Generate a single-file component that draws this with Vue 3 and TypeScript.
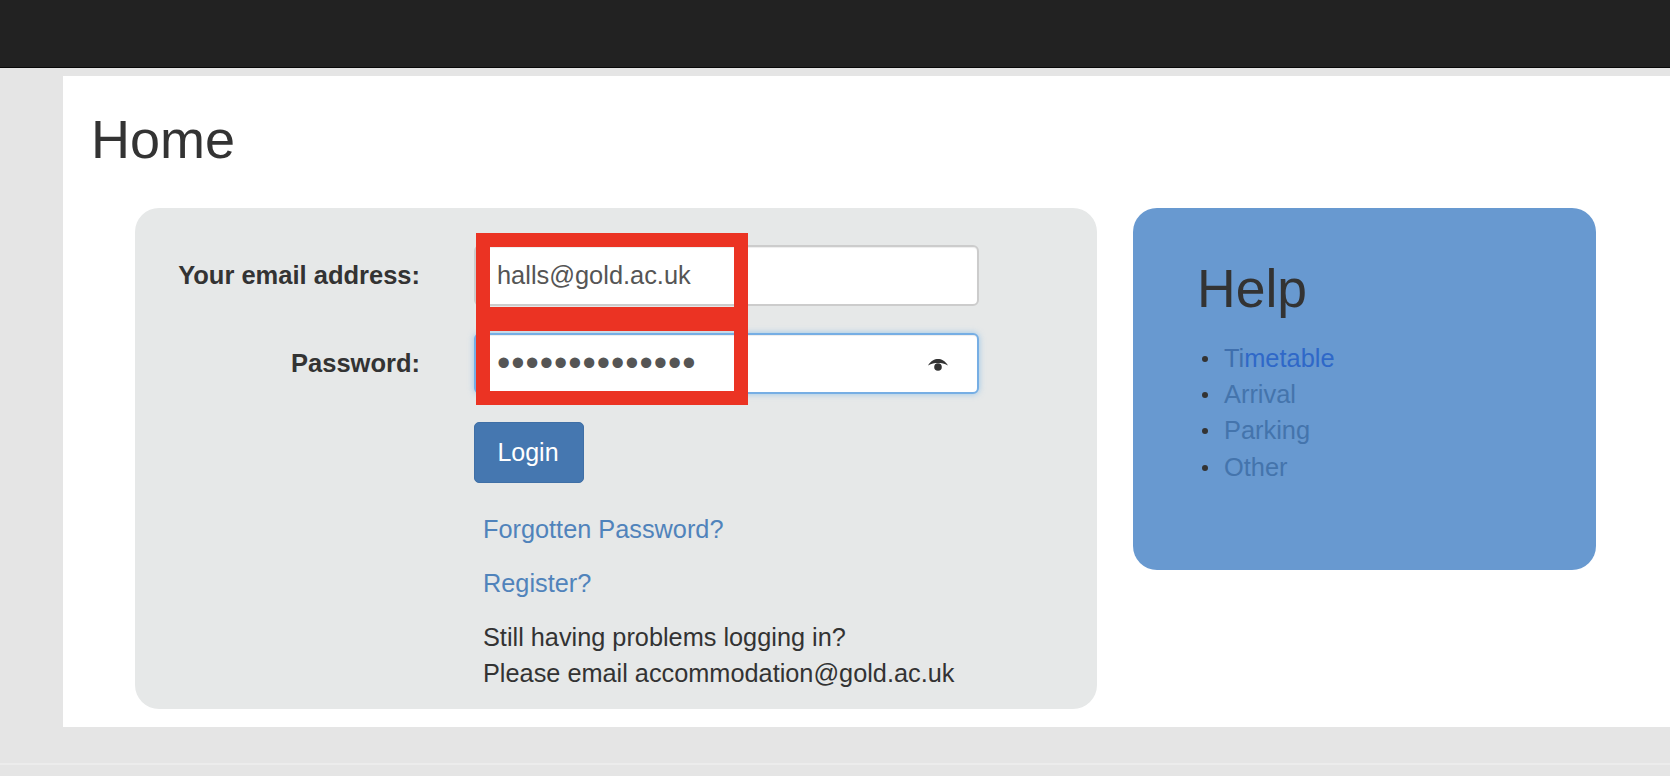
<script setup lang="ts">
const helpLinks: string[] = ['Arrival', 'Parking', 'Other']
</script>

<template>
  <div class="page">
    <header class="topbar"></header>
    <main class="content">
      <h1 class="title">Home</h1>
      <div class="columns">
        <section class="login-card">
          <form class="form" @submit.prevent>
            <label class="label" for="email">Your email address:</label>
            <div class="field">
              <input id="email" class="input" type="text" value="halls@gold.ac.uk" />
              <span class="redact"></span>
            </div>
            <label class="label" for="password">Password:</label>
            <div class="field">
              <input id="password" class="input input-focus" type="password" value="aaaaaaaaaaaaaa" />
              <svg class="eye" viewBox="0 0 22 14" width="22" height="14" aria-hidden="true">
                <path d="M1 7.5 C4 2.5 7.5 1 11 1 C14.5 1 18 2.5 21 7.5 C17.5 5.6 14.5 5 11 5 C7.5 5 4.5 5.6 1 7.5 Z" fill="#333" />
                <circle cx="11" cy="9" r="3.8" fill="#333" />
              </svg>
              <span class="redact redact-lower"></span>
            </div>
            <div class="actions">
              <button class="btn" type="submit">Login</button>
              <p class="line link-line first"><a class="link">Forgotten Password?</a></p>
              <p class="line link-line"><a class="link">Register?</a></p>
              <p class="line note">Still having problems logging in?<br />Please email accommodation@gold.ac.uk</p>
            </div>
          </form>
        </section>
        <aside class="help-card">
          <h2 class="help-title">Help</h2>
          <ul class="help-list">
            <li><a class="help-link"><span class="fade">Ti</span><span class="active">metable</span></a></li>
            <li v-for="item in helpLinks" :key="item"><a class="help-link">{{ item }}</a></li>
          </ul>
        </aside>
      </div>
    </main>
    <footer class="footer"></footer>
  </div>
</template>

<style>
html, body { margin: 0; background: #e5e5e5; }
</style>

<style scoped>
.page {
  height: 776px;
  overflow: hidden;
  background: #e5e5e5;
  font-family: "Liberation Sans", Arial, sans-serif;
  color: #333;
  font-size: 25.3px;
}
.topbar {
  height: 67px;
  background: #222;
  border-bottom: 1px solid #080808;
}
.content {
  margin: 8px 0 0 63px;
  height: 651px;
  background: #fff;
  padding: 33px 0 0 28px;
  box-sizing: border-box;
}
.title {
  margin: 0;
  font-size: 54px;
  font-weight: 400;
  line-height: 60px;
  color: #333;
}
.columns {
  display: flex;
  align-items: flex-start;
  gap: 36px;
  margin: 39px 0 0 44px;
}
.login-card {
  width: 962px;
  height: 501px;
  background: #e6e8e8;
  border-radius: 24px;
  padding-top: 37px;
  box-sizing: border-box;
}
.form {
  display: grid;
  grid-template-columns: 285px 505px;
  column-gap: 54px;
  row-gap: 27px;
}
.label {
  font-weight: 700;
  font-size: 25.5px;
  text-align: right;
  line-height: 61px;
  color: #333;
}
.field {
  position: relative;
  height: 61px;
}
.input {
  width: 100%;
  height: 61px;
  box-sizing: border-box;
  border: 2px solid #ccc;
  border-radius: 6px;
  background: #fff;
  padding: 0 21px;
  font-family: inherit;
  font-size: 25.4px;
  color: #555;
  outline: none;
  box-shadow: inset 0 1px 1px rgba(0, 0, 0, 0.075);
}
.input-focus {
  border-color: #76aee4;
  box-shadow: inset 0 1px 1px rgba(0, 0, 0, 0.075), 0 0 6px rgba(102, 175, 233, 0.6);
  font-size: 38px;
  letter-spacing: 0.95px;
}
.eye {
  position: absolute;
  right: 30px;
  top: 25px;
}
.redact {
  position: absolute;
  left: 2px;
  top: -12px;
  width: 272px;
  height: 88px;
  box-sizing: border-box;
  border: 14px solid #eb3323;
  pointer-events: none;
}
.redact-lower {
  top: -16px;
}
.actions {
  grid-column: 2;
  margin-top: 1px;
}
.btn {
  display: block;
  width: 110px;
  height: 61px;
  border: 1px solid #3f6fa6;
  border-radius: 5px;
  background: #4577b0;
  color: #fff;
  font-family: inherit;
  font-size: 25px;
  padding: 0 2px 0 0;
}
.line {
  margin: 0 0 0 9px;
  line-height: 36px;
}
.link-line {
  margin-top: 18px;
}
.link-line.first {
  margin-top: 28px;
}
.link {
  color: #5083bb;
}
.note {
  margin-top: 18px;
  color: #333;
}
.help-card {
  width: 463px;
  height: 362px;
  background: #6899d0;
  border-radius: 24px;
  padding: 51px 0 0 64px;
  box-sizing: border-box;
}
.help-title {
  margin: 0;
  font-size: 53.5px;
  font-weight: 400;
  line-height: 60px;
  color: #333;
}
.help-list {
  margin: 21px 0 0;
  padding: 0 0 0 27px;
  list-style: none;
  line-height: 36.2px;
  font-size: 25.4px;
}
.help-list li {
  position: relative;
}
.help-list li::before {
  content: "";
  position: absolute;
  left: -22px;
  top: 16px;
  width: 6px;
  height: 6px;
  border-radius: 50%;
  background: #333;
}
.help-link {
  color: #4474ac;
}
.fade {
  color: #3f6fad;
}
.active {
  color: #2f68c8;
}
.footer {
  margin-top: 36px;
  height: 2px;
  background: #ececec;
}
</style>
